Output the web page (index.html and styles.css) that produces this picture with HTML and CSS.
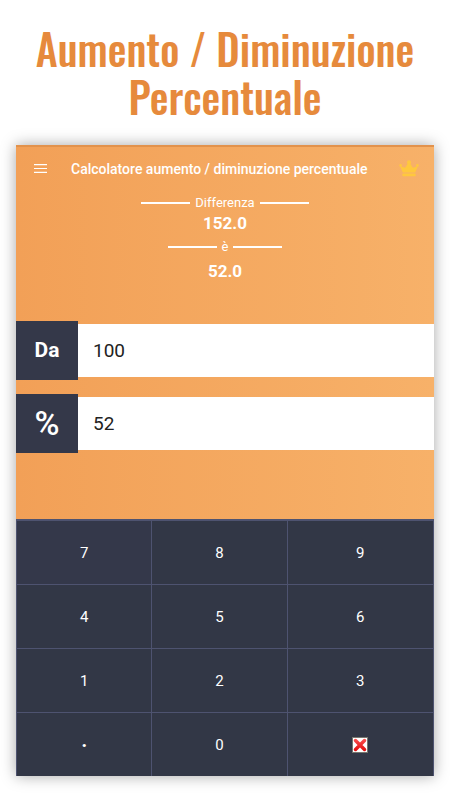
FILE: index.html
```html
<!DOCTYPE html>
<html lang="it">
<head>
    <meta charset="UTF-8">
    <meta name="viewport" content="width=device-width, initial-scale=1.0">
    <title>Aumento / Diminuzione Percentuale</title>
    <link rel="stylesheet" href="styles.css">
</head>
<body>
    <h1>Aumento / Diminuzione Percentuale</h1>

    <main class="app">
        <header class="toolbar">
            <button type="button" class="icon-button" aria-label="Menu">
                <svg width="13" height="9" viewBox="0 0 13 9">
                    <path d="M0 .7h13M0 4.5h13M0 8.3h13" stroke="#fff" stroke-width="1.2"/>
                </svg>
            </button>
            <h2>Calcolatore aumento / diminuzione percentuale</h2>
            <button type="button" class="icon-button" aria-label="Premium">
                <svg width="20" height="17" viewBox="0 0 20 17" fill="#ffc83d">
                    <circle cx="10" cy="2.2" r="2"/>
                    <circle cx="1.6" cy="5.4" r="1.3"/>
                    <circle cx="18.4" cy="5.4" r="1.3"/>
                    <path d="M1 6l4 1.6q1.2.4 1.800-.5L9 3h2l2.200 4.100q.6.9 1.800.5L19 6l-2.800 6.500H3.800z"/>
                    <rect x="3.3" y="13.5" width="13.4" height="2.8" rx="1"/>
                </svg>
            </button>
        </header>

        <section class="result">
            <p class="caption">Differenza</p>
            <p class="value">152.0</p>
            <p class="caption">è</p>
            <p class="value last">52.0</p>
        </section>

        <form class="fields">
            <div class="field">
                <label for="from">Da</label>
                <input type="text" id="from" name="from" value="100">
            </div>
            <div class="field">
                <label for="percent" class="percent">%</label>
                <input type="text" id="percent" name="percent" value="52">
            </div>
        </form>

        <div class="keypad">
            <button type="button" class="active">7</button>
            <button type="button">8</button>
            <button type="button">9</button>
            <button type="button">4</button>
            <button type="button">5</button>
            <button type="button">6</button>
            <button type="button">1</button>
            <button type="button">2</button>
            <button type="button">3</button>
            <button type="button" class="dot">·</button>
            <button type="button">0</button>
            <button type="button" aria-label="Cancella">
                <svg width="16" height="16" viewBox="0 0 16 16">
                    <defs>
                        <linearGradient id="red" x1="0" y1="0" x2="0" y2="16" gradientUnits="userSpaceOnUse">
                            <stop offset="0" stop-color="#ff5b5b"/>
                            <stop offset="1" stop-color="#df0000"/>
                        </linearGradient>
                    </defs>
                    <rect x=".5" y=".5" width="15" height="15" fill="#fff" stroke="#77776f"/>
                    <path d="M3.5 3.5l9 9M12.5 3.5l-9 9" stroke="url(#red)" stroke-width="3.5" stroke-linecap="round"/>
                </svg>
            </button>
        </div>
    </main>

    <script>
        let active = document.getElementById("percent");

        document.querySelectorAll(".field input").forEach(input => {
            input.addEventListener("focus", () => active = input);
            input.addEventListener("input", update);
        });

        document.querySelectorAll(".keypad button").forEach(button => {
            button.addEventListener("click", () => {
                const key = button.textContent.trim();
                if (key === "") {
                    active.value = active.value.slice(0, -1);
                } else {
                    active.value += key === "·" ? "." : key;
                }
                update();
            });
        });

        function update() {
            const from = Number(document.getElementById("from").value);
            const percent = Number(document.getElementById("percent").value);
            const change = from * percent / 100;
            const values = document.querySelectorAll(".value");
            values[0].innerText = (from + change).toFixed(1);
            values[1].innerText = change.toFixed(1);
        }
    </script>
</body>
</html>
```
FILE: styles.css
```css
* {
    box-sizing: border-box;
}
body {
    font-family: Roboto, sans-serif;
    margin: 0;
    padding: 24px 16px;
    background-color: #fff;
}
h1 {
    margin: 0 0 25px;
    font-family: Oswald, "Roboto Condensed", "Liberation Sans", sans-serif;
    font-size: 42px;
    font-weight: 500;
    line-height: 48px;
    text-align: center;
    color: #e68a3c;
}
h2 {
    flex: 1;
    margin: 0;
    font-size: 14px;
    font-weight: 500;
    white-space: nowrap;
}
p {
    margin: 0;
}
button {
    padding: 0;
    border: none;
    font-family: inherit;
    color: #fff;
    cursor: pointer;
}
.app {
    border-top: 2px solid #e2924c;
    background: linear-gradient(to right, #f2a057, #f7b169);
    box-shadow: 0 0 14px rgba(0, 0, 0, 0.35);
    color: #fff;
}
.toolbar {
    display: flex;
    align-items: center;
    height: 43px;
    padding: 0 15px 0 18px;
}
.icon-button {
    display: flex;
    background: none;
}
.toolbar h2 {
    margin-left: 24px;
}
.result {
    display: flex;
    flex-direction: column;
    align-items: center;
    padding: 5px 0 34px;
}
.caption {
    display: flex;
    align-items: center;
    gap: 5px;
    font-size: 13px;
    line-height: 16px;
}
.caption::before,
.caption::after {
    content: "";
    width: 49px;
    height: 2px;
    background-color: #fff;
}
.value {
    font-size: 17px;
    font-weight: bold;
    line-height: 24px;
    margin-bottom: 4px;
}
.last {
    margin-top: 4px;
}
.fields {
    display: grid;
    gap: 14px;
    padding-bottom: 66px;
}
.field {
    display: flex;
    align-items: center;
}
.field label {
    width: 62px;
    font-size: 21px;
    font-weight: bold;
    line-height: 59px;
    text-align: center;
    background-color: #343849;
}
.field .percent {
    font-size: 34px;
    font-weight: 500;
}
.field input {
    flex: 1;
    min-width: 0;
    height: 53px;
    padding: 0 15px;
    border: none;
    font-family: inherit;
    font-size: 19px;
    color: #222;
    background-color: #fff;
}
.keypad {
    display: grid;
    grid-template-columns: 135fr 135fr 146fr;
    grid-auto-rows: 63px;
    gap: 1px;
    padding: 2px 1px 0;
    background-color: #4e5370;
}
.keypad button {
    display: flex;
    align-items: center;
    justify-content: center;
    font-size: 15px;
    background-color: #323746;
}
.keypad .active {
    background-color: #34384a;
}
.keypad .dot {
    font-size: 20px;
    font-weight: bold;
}
```
